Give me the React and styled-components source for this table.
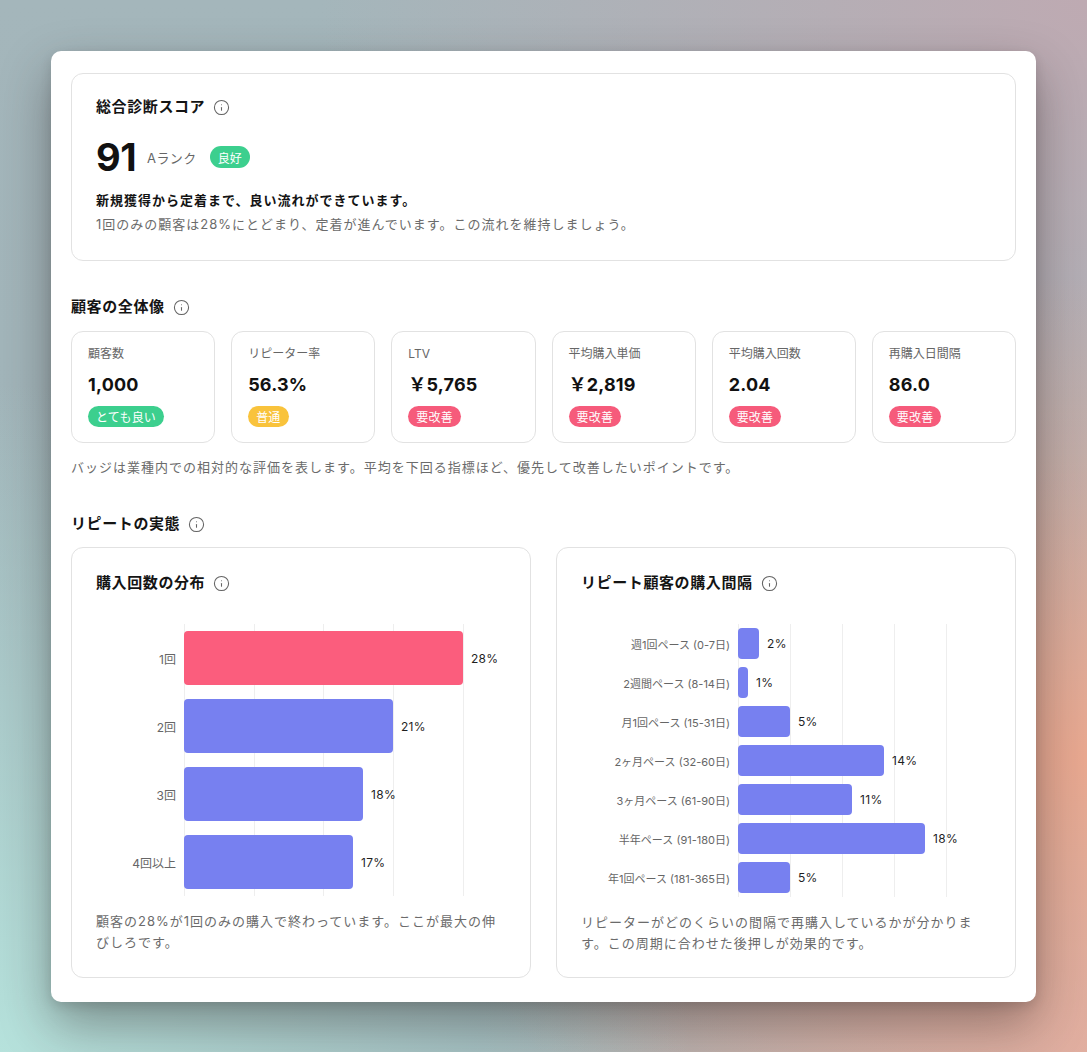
import React from 'react';
import styled, { createGlobalStyle } from 'styled-components';
import { Info } from 'lucide-react';

const GlobalStyle = createGlobalStyle`
  * {
    box-sizing: border-box;
  }
  body {
    margin: 0;
    font-family: Inter, "Noto Sans CJK JP", sans-serif;
    color: #141414;
  }
`;

// Page and panel
const Page = styled.div`
  min-height: 100vh;
  padding: 51px;
  background:
    radial-gradient(ellipse at 0% 100%, #b6e2dc 0%, rgba(182, 226, 220, 0) 45%),
    radial-gradient(ellipse at 100% 72%, #e9a890 0%, rgba(233, 168, 144, 0) 45%),
    radial-gradient(ellipse at 100% 0%, #beaab2 0%, rgba(190, 170, 178, 0) 50%),
    radial-gradient(ellipse at 100% 100%, #dcb2aa 0%, rgba(220, 178, 170, 0) 40%),
    linear-gradient(180deg, #a4b6bb 0%, #9eb3b8 100%);
`;

const Panel = styled.div`
  width: 985px;
  background: #fff;
  border-radius: 10px;
  padding: 22px 20px 24px;
  box-shadow: 0 22px 50px rgba(40, 30, 30, 0.4), 0 4px 12px rgba(0, 0, 0, 0.12);
`;

const Card = styled.div`
  border: 1px solid #e2e2e2;
  border-radius: 12px;
  background: #fff;
  padding: ${({ $pad }) => $pad || '22px 24px 26px'};
`;

const TitleRow = styled.div`
  display: flex;
  align-items: center;
  gap: 8px;
  height: 22px;
  margin: ${({ $margin }) => $margin || '0'};
`;

const Title = styled.h2`
  margin: 0;
  font-size: 15px;
  font-weight: 700;
  letter-spacing: 0.6px;
  line-height: 22px;
  color: #141414;
`;

const InfoIcon = styled(Info)`
  color: #646464;
  flex: none;
`;

// Score card
const ScoreRow = styled.div`
  display: flex;
  align-items: center;
  height: 44px;
  margin-top: 17px;
`;

const ScoreValue = styled.span`
  font-size: 38px;
  font-weight: 700;
  letter-spacing: -0.5px;
  line-height: 44px;
  color: #111;
`;

const Rank = styled.span`
  font-size: 13px;
  color: #666;
  margin: 0 13px 0 11px;
  letter-spacing: 0.4px;
`;

const Badge = styled.span`
  display: inline-flex;
  align-items: center;
  height: ${({ $h }) => $h || 21}px;
  padding: 0 8px;
  border-radius: 11px;
  font-size: 12px;
  color: #fff;
  letter-spacing: 0.2px;
  background: ${({ $tone }) =>
    $tone === 'good' ? '#3ccf8e' : $tone === 'mid' ? '#f9c33c' : '#f65b7b'};
`;

const Lead = styled.p`
  margin: 11px 0 0;
  font-size: 13px;
  font-weight: 700;
  letter-spacing: 1px;
  line-height: 20px;
  color: #141414;
`;

const Body = styled.p`
  margin: 4px 0 0;
  font-size: 13px;
  letter-spacing: 1px;
  line-height: 20px;
  color: #6b6b6b;
`;

// Metrics
const Metrics = styled.div`
  display: grid;
  grid-template-columns: repeat(6, 1fr);
  gap: 16px;
  margin-top: 13px;
`;

const MetricCard = styled.div`
  border: 1px solid #e2e2e2;
  border-radius: 12px;
  padding: 14px 16px 15px;
  height: 112px;
`;

const MetricLabel = styled.div`
  font-size: 12px;
  line-height: 16px;
  color: #666;
`;

const MetricValue = styled.div`
  margin: 11px 0 9px;
  font-size: 18px;
  font-weight: 700;
  line-height: 24px;
  color: #111;
  letter-spacing: 0.2px;
`;

const Note = styled.p`
  margin: 14px 0 0;
  font-size: 13px;
  letter-spacing: 1px;
  line-height: 20px;
  color: #6b6b6b;
`;

// Charts
const Charts = styled.div`
  display: grid;
  grid-template-columns: 1fr 1fr;
  gap: 25px;
  margin-top: 12px;
`;

const ChartGrid = styled.div`
  display: grid;
  grid-template-columns: ${({ $labelW }) => $labelW}px 1fr;
  column-gap: 8px;
  margin-top: 30px;
`;

const RowLabel = styled.div`
  display: flex;
  align-items: center;
  justify-content: flex-end;
  height: ${({ $rowH }) => $rowH}px;
  font-size: ${({ $fs }) => $fs}px;
  color: #666;
  white-space: nowrap;
`;

const Track = styled.div`
  display: flex;
  align-items: center;
  height: ${({ $rowH }) => $rowH}px;
  background-image: repeating-linear-gradient(
    90deg,
    #eeeeee 0,
    #eeeeee 1px,
    transparent 1px,
    transparent ${({ $step }) => $step}px
  );
  background-size: ${({ $plot }) => $plot + 1}px 100%;
  background-repeat: no-repeat;
`;

const Bar = styled.div`
  height: ${({ $barH }) => $barH}px;
  border-radius: 4px;
  background: ${({ $color }) => $color};
  flex: none;
`;

const BarValue = styled.span`
  margin-left: 8px;
  font-size: 12px;
  color: #1f1f1f;
  letter-spacing: 0.3px;
`;

const ChartNote = styled.p`
  margin: 15px 0 0;
  padding-right: 9px;
  font-size: 13px;
  letter-spacing: 1px;
  line-height: 21px;
  color: #6b6b6b;
`;

const PINK = '#fb5d7d';
const BLUE = '#7780f0';

const metrics = [
  { label: '顧客数', value: '1,000', badge: 'とても良い', tone: 'good' },
  { label: 'リピーター率', value: '56.3%', badge: '普通', tone: 'mid' },
  { label: 'LTV', value: '￥5,765', badge: '要改善', tone: 'bad' },
  { label: '平均購入単価', value: '￥2,819', badge: '要改善', tone: 'bad' },
  { label: '平均購入回数', value: '2.04', badge: '要改善', tone: 'bad' },
  { label: '再購入日間隔', value: '86.0', badge: '要改善', tone: 'bad' },
];

const countData = [
  { label: '1回', value: 28, color: PINK },
  { label: '2回', value: 21, color: BLUE },
  { label: '3回', value: 18, color: BLUE },
  { label: '4回以上', value: 17, color: BLUE },
];

const intervalData = [
  { label: '週1回ペース (0-7日)', value: 2 },
  { label: '2週間ペース (8-14日)', value: 1 },
  { label: '月1回ペース (15-31日)', value: 5 },
  { label: '2ヶ月ペース (32-60日)', value: 14 },
  { label: '3ヶ月ペース (61-90日)', value: 11 },
  { label: '半年ペース (91-180日)', value: 18 },
  { label: '年1回ペース (181-365日)', value: 5 },
];

const Heading = ({ children, margin }) => (
  <TitleRow $margin={margin}>
    <Title>{children}</Title>
    <InfoIcon size={17} strokeWidth={1.5} />
  </TitleRow>
);

const BarChart = ({ data, labelW, plot, max, rowH, barH, fs }) => (
  <ChartGrid $labelW={labelW}>
    {data.map((d) => (
      <React.Fragment key={d.label}>
        <RowLabel $rowH={rowH} $fs={fs}>{d.label}</RowLabel>
        <Track $rowH={rowH} $plot={plot} $step={plot / 4}>
          <Bar
            $barH={barH}
            $color={d.color || BLUE}
            style={{ width: Math.round((plot * d.value) / max) }}
          />
          <BarValue>{d.value}%</BarValue>
        </Track>
      </React.Fragment>
    ))}
  </ChartGrid>
);

const App = () => (
  <Page>
    <GlobalStyle />
    <Panel>
      <Card>
        <Heading>総合診断スコア</Heading>
        <ScoreRow>
          <ScoreValue>91</ScoreValue>
          <Rank>Aランク</Rank>
          <Badge $tone="good" $h={22}>良好</Badge>
        </ScoreRow>
        <Lead>新規獲得から定着まで、良い流れができています。</Lead>
        <Body>1回のみの顧客は28%にとどまり、定着が進んでいます。この流れを維持しましょう。</Body>
      </Card>

      <Heading margin="35px 0 0">顧客の全体像</Heading>
      <Metrics>
        {metrics.map((m) => (
          <MetricCard key={m.label}>
            <MetricLabel>{m.label}</MetricLabel>
            <MetricValue>{m.value}</MetricValue>
            <Badge $tone={m.tone}>{m.badge}</Badge>
          </MetricCard>
        ))}
      </Metrics>
      <Note>バッジは業種内での相対的な評価を表します。平均を下回る指標ほど、優先して改善したいポイントです。</Note>

      <Heading margin="36px 0 0">リピートの実態</Heading>
      <Charts>
        <Card $pad="24px 24px 23px">
          <Heading>購入回数の分布</Heading>
          <BarChart data={countData} labelW={80} plot={279} max={28} rowH={68} barH={54} fs={12} />
          <ChartNote>顧客の28%が1回のみの購入で終わっています。ここが最大の伸びしろです。</ChartNote>
        </Card>
        <Card $pad="24px 24px 23px">
          <Heading>リピート顧客の購入間隔</Heading>
          <BarChart data={intervalData} labelW={149} plot={208} max={20} rowH={39} barH={31} fs={11} />
          <ChartNote>リピーターがどのくらいの間隔で再購入しているかが分かります。この周期に合わせた後押しが効果的です。</ChartNote>
        </Card>
      </Charts>
    </Panel>
  </Page>
);

export default App;
